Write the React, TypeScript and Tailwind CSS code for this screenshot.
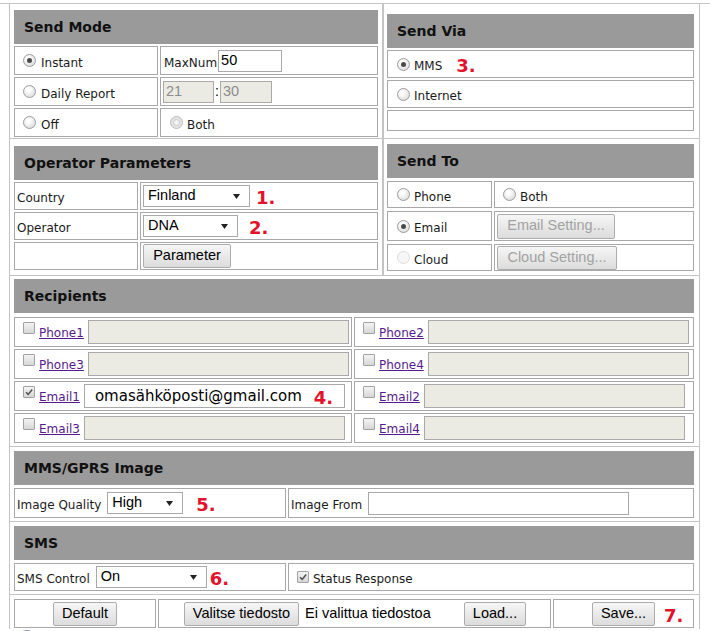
import React from 'react';

const arial = "font-['Liberation_Sans',Arial,sans-serif]";

type Kids = { children?: React.ReactNode; className?: string };

const Header = ({ title }: { title: string }) => (
  <div className="flex h-[34px] shrink-0 items-center bg-[#9a9a9a] pl-[10px] text-[14px] font-bold text-[#111]">
    {title}
  </div>
);

const Cell = ({ children, className = '' }: Kids) => (
  <div className={`flex min-w-0 items-center border border-[#a8a8a8] ${className}`}>{children}</div>
);

const Label = ({ children, className = '' }: Kids) => (
  <span className={`mt-[4px] whitespace-nowrap text-[12px] text-[#1a1a1a] ${className}`}>{children}</span>
);

const Mark = ({ n, className = '' }: { n: number; className?: string }) => (
  <span className={`mt-[4px] text-[18px] font-bold leading-none text-[#e3122b] ${className}`}>{n}.</span>
);

const Radio = ({ checked = false, dim = false, off = false }: { checked?: boolean; dim?: boolean; off?: boolean }) => {
  if (off) {
    return <span className="h-[13px] w-[13px] shrink-0 rounded-full border border-[#dcdcdc] bg-[#f6f6f6]" />;
  }
  if (dim) {
    return (
      <span className="flex h-[13px] w-[13px] shrink-0 items-center justify-center rounded-full border border-[#bdbdbd] bg-[#e4e4e4]">
        <span className="h-[7px] w-[7px] rounded-full border border-[#c9c9c9] bg-[#f4f4f4]" />
      </span>
    );
  }
  return (
    <span className="flex h-[13px] w-[13px] shrink-0 items-center justify-center rounded-full border border-[#9c9c9c] bg-[radial-gradient(circle_at_40%_35%,#ffffff_15%,#d2d2d2_100%)]">
      {checked && <span className="h-[5px] w-[5px] rounded-full bg-[#4a4a4a]" />}
    </span>
  );
};

const Check = ({ checked = false, className = '' }: { checked?: boolean; className?: string }) => (
  <span
    className={`flex h-[12px] w-[12px] shrink-0 items-center justify-center rounded-[1px] border border-[#a2a2a2] bg-linear-to-b from-[#f4f4f4] to-[#d6d6d6] ${className}`}
  >
    {checked && (
      <svg width="10" height="10" viewBox="0 0 10 10">
        <path d="M2 5.2 L4.2 7.4 L8.2 2.4" stroke="#555" strokeWidth="1.6" fill="none" />
      </svg>
    )}
  </span>
);

const Field = ({ children, className = '', disabled = false }: Kids & { disabled?: boolean }) => (
  <div
    className={`flex shrink-0 items-center border border-[#a9a9a9] pl-[2px] text-[14.5px] ${arial} ${
      disabled ? 'bg-[#ebebe4] text-[#8c8c8c]' : 'bg-white text-black'
    } ${className}`}
  >
    {children}
  </div>
);

const Select = ({ value, className = '' }: { value: string; className?: string }) => (
  <div
    className={`flex h-[22px] shrink-0 items-center justify-between border border-[#a9a9a9] bg-white pl-[4px] pr-[9px] text-[14.5px] text-black ${arial} ${className}`}
  >
    <span>{value}</span>
    <svg width="7" height="5" viewBox="0 0 7 5">
      <path d="M0 0 H7 L3.5 5 Z" fill="#222" />
    </svg>
  </div>
);

const Button = ({ children, className = '', disabled = false }: Kids & { disabled?: boolean }) => (
  <div
    className={`flex shrink-0 items-center justify-center rounded-[2px] border border-[#acacac] bg-linear-to-b from-[#f6f6f6] to-[#dcdcdc] text-[14.5px] ${arial} ${
      disabled ? 'text-[#a2a2a2]' : 'text-black'
    } ${className}`}
  >
    {children}
  </div>
);

const Recipient = ({ label, value, checked = false }: {
  label: string;
  value?: React.ReactNode;
  checked?: boolean;
}) => (
  <Cell className="gap-[4px] pl-[8px]">
    <Check checked={checked} className="mb-[8px]" />
    <span className="mt-[1px] whitespace-nowrap text-[12px] text-[#551a8b] underline">{label}</span>
    <Field disabled={!value} className="h-[24px] w-[261px]">
      {value}
    </Field>
  </Cell>
);

export default function App() {
  return (
    <div className="h-[631px] w-[710px] overflow-hidden bg-white font-['DejaVu_Sans',Verdana,sans-serif] text-[12px] text-black">
      <div className="mt-[3px] border-t border-[#c4c4c4]">
        <div className="ml-[9px] w-[691px] border-x border-[#c4c4c4]">
          {/* mode / operator / via / to */}
          <div className="flex border-b border-[#c4c4c4]">
            <div className="flex w-[373px] shrink-0 flex-col border-r border-[#c4c4c4]">
              <div className="flex flex-col gap-[2px] border-b border-[#c4c4c4] px-[4px] pb-[1px] pt-[6px]">
                <Header title="Send Mode" />
                <div className="grid h-[29px] grid-cols-[144px_1fr] gap-[2px]">
                  <Cell className="gap-[5px] pl-[8px]">
                    <Radio checked />
                    <Label>Instant</Label>
                  </Cell>
                  <Cell className="pl-[3px]">
                    <Label className="mt-[2px]">MaxNum</Label>
                    <Field className="ml-[1px] h-[22px] w-[64px]">50</Field>
                  </Cell>
                </div>
                <div className="grid h-[29px] grid-cols-[144px_1fr] gap-[2px]">
                  <Cell className="gap-[5px] pl-[8px]">
                    <Radio />
                    <Label>Daily Report</Label>
                  </Cell>
                  <Cell className="pl-[2px]">
                    <Field disabled className="h-[22px] w-[51px]">
                      21
                    </Field>
                    <span className={`mx-[1px] text-[14px] ${arial}`}>:</span>
                    <Field disabled className="h-[22px] w-[52px]">
                      30
                    </Field>
                  </Cell>
                </div>
                <div className="grid h-[29px] grid-cols-[144px_1fr] gap-[2px]">
                  <Cell className="gap-[5px] pl-[8px]">
                    <Radio />
                    <Label>Off</Label>
                  </Cell>
                  <Cell className="gap-[4px] pl-[9px]">
                    <Radio dim />
                    <Label>Both</Label>
                  </Cell>
                </div>
              </div>

              <div className="flex flex-1 flex-col gap-[2px] px-[4px] pb-[5px] pt-[7px]">
                <Header title="Operator Parameters" />
                <div className="grid h-[28px] grid-cols-[124px_1fr] gap-[2px]">
                  <Cell className="pl-[2px]">
                    <Label className="mt-[1px]">Country</Label>
                  </Cell>
                  <Cell className="pl-[2px]">
                    <Select value="Finland" className="w-[107px]" />
                    <Mark n={1} className="ml-[6px]" />
                  </Cell>
                </div>
                <div className="grid h-[28px] grid-cols-[124px_1fr] gap-[2px]">
                  <Cell className="pl-[2px]">
                    <Label className="mt-[1px]">Operator</Label>
                  </Cell>
                  <Cell className="pl-[2px]">
                    <Select value="DNA" className="w-[95px]" />
                    <Mark n={2} className="ml-[11px]" />
                  </Cell>
                </div>
                <div className="grid h-[28px] grid-cols-[124px_1fr] gap-[2px]">
                  <Cell />
                  <Cell className="pl-[2px]">
                    <Button className="h-[24px] w-[88px]">Parameter</Button>
                  </Cell>
                </div>
              </div>
            </div>

            <div className="flex flex-1 flex-col border-l border-[#c4c4c4]">
              <div className="flex flex-col gap-[2px] border-b border-[#c4c4c4] pb-[7px] pl-[3px] pr-[5px] pt-[10px]">
                <Header title="Send Via" />
                <Cell className="h-[28px] gap-[4px] pl-[9px]">
                  <Radio checked />
                  <Label className="mt-[2px]">MMS</Label>
                  <Mark n={3} className="ml-[10px]" />
                </Cell>
                <Cell className="h-[28px] gap-[4px] pl-[9px]">
                  <Radio />
                  <Label className="mt-[2px]">Internet</Label>
                </Cell>
                <Cell className="h-[21px]" />
              </div>

              <div className="flex flex-1 flex-col gap-[3px] pb-[4px] pl-[3px] pr-[5px] pt-[5px]">
                <Header title="Send To" />
                <div className="grid h-[27px] grid-cols-[105px_1fr] gap-[2px]">
                  <Cell className="gap-[4px] pl-[9px]">
                    <Radio />
                    <Label>Phone</Label>
                  </Cell>
                  <Cell className="gap-[4px] pl-[8px]">
                    <Radio />
                    <Label>Both</Label>
                  </Cell>
                </div>
                <div className="grid h-[30px] grid-cols-[105px_1fr] gap-[2px]">
                  <Cell className="gap-[4px] pl-[9px]">
                    <Radio checked />
                    <Label>Email</Label>
                  </Cell>
                  <Cell className="pl-[2px]">
                    <Button disabled className="h-[25px] w-[118px]">
                      Email Setting...
                    </Button>
                  </Cell>
                </div>
                <div className="grid h-[27px] grid-cols-[105px_1fr] gap-[2px]">
                  <Cell className="gap-[4px] pl-[9px]">
                    <Radio off />
                    <Label>Cloud</Label>
                  </Cell>
                  <Cell className="pl-[2px]">
                    <Button disabled className="h-[24px] w-[120px]">
                      Cloud Setting...
                    </Button>
                  </Cell>
                </div>
              </div>
            </div>
          </div>

          {/* recipients */}
          <div className="flex flex-col border-b border-[#c4c4c4] pb-[3px] pl-[4px] pr-[5px] pt-[3px]">
            <Header title="Recipients" />
            <div className="mt-[4px] grid auto-rows-[30px] grid-cols-[338px_1fr] gap-[2px]">
              <Recipient label="Phone1" />
              <Recipient label="Phone2" />
              <Recipient label="Phone3" />
              <Recipient label="Phone4" />
              <Recipient
                label="Email1"
                checked
                value={
                  <span className="flex items-center pl-[8px]">
                    <span className="text-[15px] text-black font-['Comic_Sans_MS','DejaVu_Sans',sans-serif]">
                      omasähköposti@gmail.com
                    </span>
                    <Mark n={4} className="ml-[12px] mt-[2px] font-['DejaVu_Sans',sans-serif]" />
                  </span>
                }
              />
              <Recipient label="Email2" />
              <Recipient label="Email3" />
              <Recipient label="Email4" />
            </div>
          </div>

          {/* image */}
          <div className="flex flex-col gap-[3px] border-b border-[#c4c4c4] pb-[3px] pl-[4px] pr-[5px] pt-[4px]">
            <Header title="MMS/GPRS Image" />
            <div className="grid h-[30px] grid-cols-[272px_1fr] gap-[2px]">
              <Cell className="pl-[2px]">
                <Label className="mt-[1px]">Image Quality</Label>
                <Select value="High" className="ml-[6px] w-[76px]" />
                <Mark n={5} className="ml-[13px]" />
              </Cell>
              <Cell className="pl-[2px]">
                <Label className="mt-[1px]">Image From</Label>
                <Field className="ml-[6px] h-[23px] w-[261px]" />
              </Cell>
            </div>
          </div>

          {/* sms */}
          <div className="flex flex-col gap-[3px] border-b border-[#c4c4c4] pb-[3px] pl-[4px] pr-[5px] pt-[4px]">
            <Header title="SMS" />
            <div className="grid h-[28px] grid-cols-[272px_1fr] gap-[2px]">
              <Cell className="pl-[2px]">
                <Label className="mt-[1px]">SMS Control</Label>
                <Select value="On" className="ml-[6px] w-[111px]" />
                <Mark n={6} className="ml-[3px]" />
              </Cell>
              <Cell className="gap-[4px] pl-[8px]">
                <Check checked />
                <Label>Status Response</Label>
              </Cell>
            </div>
          </div>

          {/* defaults / file / save */}
          <div className="pb-[1px] pl-[4px] pr-[5px] pt-[4px]">
            <div className="grid h-[29px] grid-cols-[142px_393px_1fr] gap-[2px]">
              <Cell className="justify-center">
                <Button className="h-[24px] w-[64px]">Default</Button>
              </Cell>
              <Cell className={`pl-[25px] text-[14.5px] ${arial}`}>
                <Button className="h-[24px] w-[115px]">Valitse tiedosto</Button>
                <span className="w-[159px] whitespace-nowrap pl-[6px]">Ei valittua tiedostoa</span>
                <Button className="ml-[6px] h-[24px] w-[62px]">Load...</Button>
              </Cell>
              <Cell className="pl-[38px]">
                <Button className="h-[24px] w-[63px]">Save...</Button>
                <Mark n={7} className="ml-[9px]" />
              </Cell>
            </div>
          </div>
        </div>
        <svg width="40" height="12" className="ml-[12px]">
          <circle cx="15" cy="15" r="13" fill="none" stroke="#5b7d9c" strokeWidth="1.5" />
        </svg>
      </div>
    </div>
  );
}
